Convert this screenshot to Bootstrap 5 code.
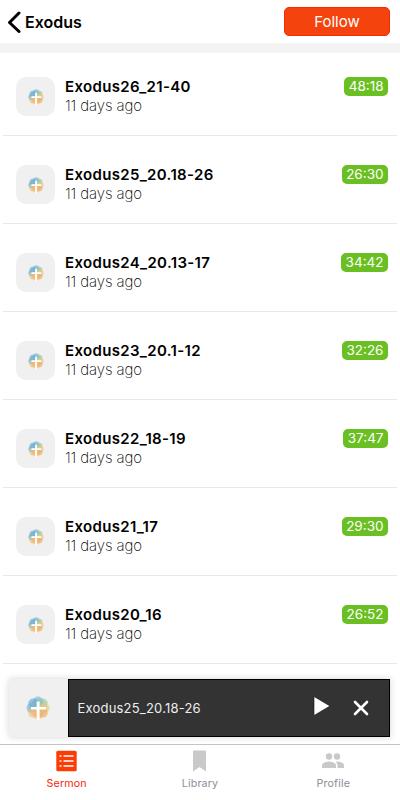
<!DOCTYPE html>
<html lang="en">
<head>
<meta charset="utf-8">
<meta name="viewport" content="width=device-width, initial-scale=1">
<title>Exodus</title>
<link href="https://cdn.jsdelivr.net/npm/bootstrap@5.3.0/dist/css/bootstrap.min.css" rel="stylesheet">
<style>
body{font-family:Inter,"Liberation Sans",sans-serif;color:#000;height:800px;overflow:hidden}
svg{display:block;flex:none}
.topbar{height:43px;padding:0 10px 0 7px}
.page-title{font-size:16px;font-weight:600;line-height:20px;margin:0 0 0 4px}
.follow{width:106px;height:29px;margin-top:-1px;background:#f4430c;border:1px solid #f22a08;border-radius:5px;color:#fff;font-size:15px;line-height:27px;padding:0}
.band{height:10px;background:#f3f3f3}
.sermons{margin:-5px 3px 0}
.sermon{height:88px;padding:29px 9px 0 13px;border-bottom:1px solid #e8e8e8}
.thumb{width:39px;height:39px;border-radius:10px;background:#f0f0f0;margin-top:.4px}
.info{margin-left:10px}
.name{font-size:15px;font-weight:600;line-height:19px;letter-spacing:.34px}
.ago{font-size:15px;font-weight:200;line-height:19px;color:#000;letter-spacing:-.1px}
.time{height:19px;background:#6abf22;border-radius:5px;color:#fff;font-size:13.5px;line-height:19px;padding:0 4.5px;margin-left:auto}
.player{height:58px;margin:15px 10px 0 9px;box-shadow:0 0 7px rgba(0,0,0,.17)}
.cover{width:59px;background:#f0f0f0;padding-right:1.5px}
.deck{background:#333;border:1px solid #000;color:#eee;font-size:13px;padding:0 20px 0 8.5px}
.deck .track{letter-spacing:.2px;margin-top:2px}
.deck .dismiss{margin-left:22px}
.tabs{height:56px;margin-top:7px;border-top:1px solid #c4c4c4;background:#fff}
.tab{font-size:10.7px;line-height:14px;color:#8e8e93;letter-spacing:.15px}
.tab svg{margin:5px 0}
.tab.current{color:#f5280c}
</style>
<script src="https://cdn.jsdelivr.net/npm/bootstrap@5.3.0/dist/js/bootstrap.bundle.min.js"></script>
</head>
<body class="bg-white d-flex flex-column">
<svg width="0" height="0" class="position-absolute"><defs><symbol id="logo" viewBox="0 0 24 24">
<circle cx="12" cy="12" r="9" fill="#d5cda9"/>
<g fill-opacity=".65"><circle cx="12" cy="5.5" r="5" fill="#72b9dc"/><circle cx="7.2" cy="7.5" r="5" fill="#65acd8"/><circle cx="16.800" cy="7.500" r="5" fill="#9acb9e"/><circle cx="5.500" cy="12" r="5" fill="#74b5d6"/><circle cx="18.500" cy="12" r="5" fill="#e6cd8c"/><circle cx="7.200" cy="16.700" r="5" fill="#f8bd78"/><circle cx="16.800" cy="16.700" r="5" fill="#f5ac62"/><circle cx="12" cy="18.500" r="5" fill="#f7b670"/></g>
<path d="M10.700 5.500h2.900v5.500H20v2.400h-6.400V24h-2.900V13.400H5V11h5.700z" fill="#fff"/></symbol></defs></svg>

<header class="topbar d-flex align-items-center">
<svg width="14" height="22" viewBox="0 0 14 22"><path d="M12 2 2.500 11.500 12 20.500" fill="none" stroke="#000" stroke-width="3" stroke-linecap="round" stroke-linejoin="round"/></svg>
<h1 class="page-title">Exodus</h1>
<button class="btn follow ms-auto">Follow</button>
</header>
<div class="band flex-shrink-0"></div>

<main class="sermons">
<div class="sermon d-flex align-items-start"><div class="thumb d-flex align-items-center justify-content-center"><svg width="16" height="16"><use href="#logo"/></svg></div><div class="info"><div class="name">Exodus26_21-40</div><div class="ago">11 days ago</div></div><span class="time">48:18</span></div>
<div class="sermon d-flex align-items-start"><div class="thumb d-flex align-items-center justify-content-center"><svg width="16" height="16"><use href="#logo"/></svg></div><div class="info"><div class="name">Exodus25_20.18-26</div><div class="ago">11 days ago</div></div><span class="time">26:30</span></div>
<div class="sermon d-flex align-items-start"><div class="thumb d-flex align-items-center justify-content-center"><svg width="16" height="16"><use href="#logo"/></svg></div><div class="info"><div class="name">Exodus24_20.13-17</div><div class="ago">11 days ago</div></div><span class="time">34:42</span></div>
<div class="sermon d-flex align-items-start"><div class="thumb d-flex align-items-center justify-content-center"><svg width="16" height="16"><use href="#logo"/></svg></div><div class="info"><div class="name">Exodus23_20.1-12</div><div class="ago">11 days ago</div></div><span class="time">32:26</span></div>
<div class="sermon d-flex align-items-start"><div class="thumb d-flex align-items-center justify-content-center"><svg width="16" height="16"><use href="#logo"/></svg></div><div class="info"><div class="name">Exodus22_18-19</div><div class="ago">11 days ago</div></div><span class="time">37:47</span></div>
<div class="sermon d-flex align-items-start"><div class="thumb d-flex align-items-center justify-content-center"><svg width="16" height="16"><use href="#logo"/></svg></div><div class="info"><div class="name">Exodus21_17</div><div class="ago">11 days ago</div></div><span class="time">29:30</span></div>
<div class="sermon d-flex align-items-start"><div class="thumb d-flex align-items-center justify-content-center"><svg width="16" height="16"><use href="#logo"/></svg></div><div class="info"><div class="name">Exodus20_16</div><div class="ago">11 days ago</div></div><span class="time">26:52</span></div>
</main>

<section class="player d-flex flex-shrink-0">
<div class="cover d-flex align-items-center justify-content-center"><svg width="24" height="24"><use href="#logo"/></svg></div>
<div class="deck d-flex align-items-center flex-grow-1">
<span class="track">Exodus25_20.18-26</span>
<svg class="ms-auto mb-1" width="18" height="20" viewBox="0 0 18 20"><path d="M1 .5 17 10 1 19.500z" fill="#fff" stroke="#111" stroke-width=".6"/></svg>
<svg class="dismiss" width="16" height="16" viewBox="0 0 16 16"><path d="m2 2 12 12M14 2 2 14" stroke="#fff" stroke-width="2.600" stroke-linecap="round"/></svg>
</div>
</section>

<nav class="tabs d-flex flex-shrink-0">
<div class="tab current col-4 d-flex flex-column align-items-center"><svg width="22" height="22" viewBox="0 0 22 22"><rect x=".3" y=".8" width="20.400" height="20.400" rx="1.500" fill="#fb3c05"/><path d="M7.500 6h10M7.500 11h10M7.500 16h10M3.500 6h2M3.500 11h2M3.500 16h2" stroke="#fff" stroke-width="1.300"/></svg>Sermon</div>
<div class="tab col-4 d-flex flex-column align-items-center"><svg width="22" height="22" viewBox="0 0 22 22"><path d="M4 1.500a1 1 0 0 1 1-1h11a1 1 0 0 1 1 1v20L10.500 17 4 21.500z" fill="#c9c9c9"/></svg>Library</div>
<div class="tab col-4 d-flex flex-column align-items-center"><svg width="22" height="22" viewBox="0 0 22 22"><g fill="#c9c9c9"><circle cx="7" cy="6.500" r="3.200"/><circle cx="15" cy="6.500" r="3.200"/><path d="M0 18V15.500c0-2.700 4.500-4 7-4s7 1.300 7 4V18zM15.500 18V15.500c0-1.600-.8-2.900-2-3.700 3-.9 8.500.5 8.500 3.700V18z"/></g></svg>Profile</div>
</nav>
</body>
</html>
